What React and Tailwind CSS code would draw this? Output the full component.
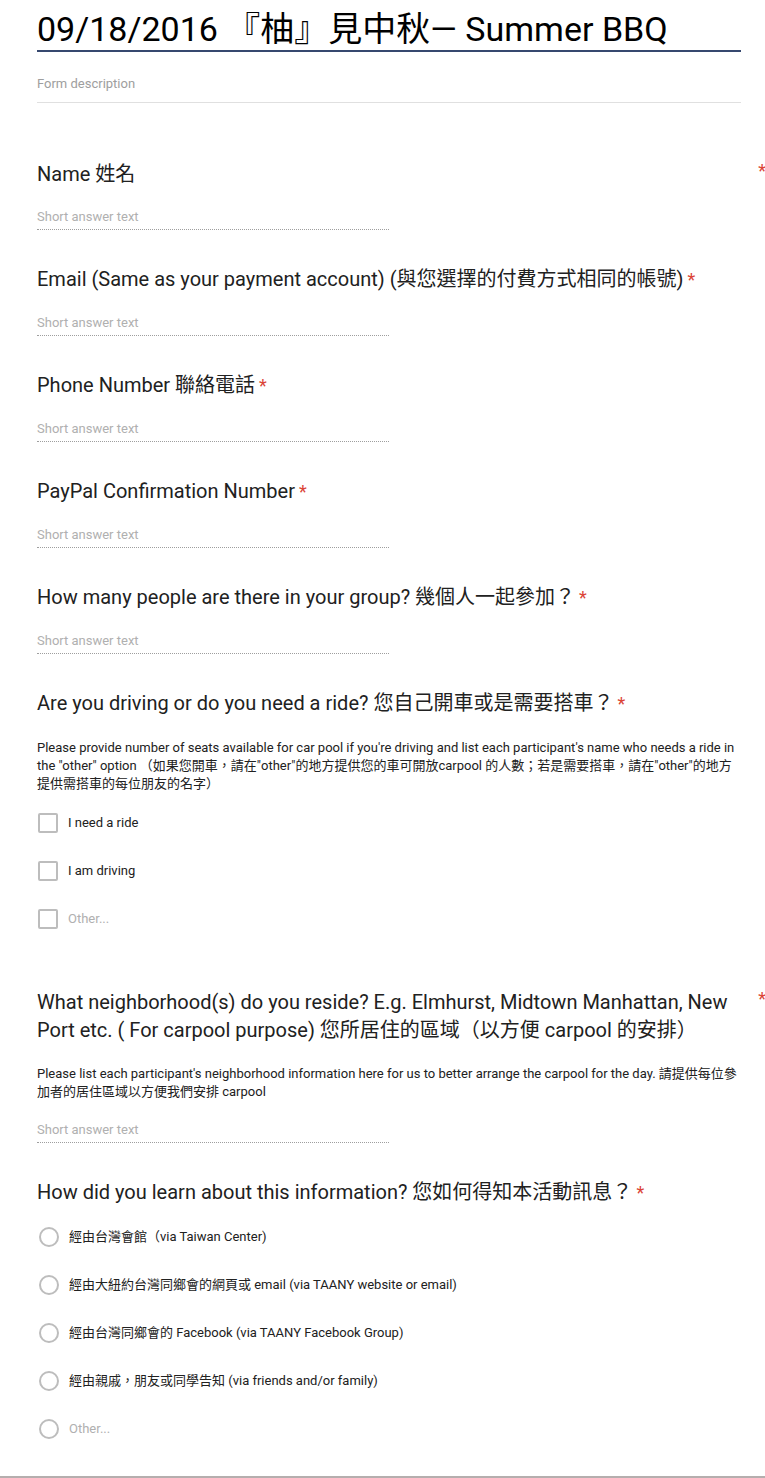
import React from "react";

const FONT = { fontFamily: 'Roboto, "Noto Sans CJK TC", sans-serif' };

function Star({ className = "" }) {
  return <span className={"text-[#db4437] " + className}>*</span>;
}

function Question({ title, inlineStar = true, farStar = false, children }) {
  return (
    <div className="relative mt-[35px]">
      <div className="text-[20px] leading-[28px] text-[#212121]">
        {title}
        {inlineStar && <Star className="ml-[4px] text-[18px]" />}
      </div>
      {farStar && (
        <span className="absolute right-[-25px] top-[0px] text-[18px] leading-[22px] text-[#db4437]">*</span>
      )}
      {children}
    </div>
  );
}

function ShortAnswer() {
  return (
    <div className="mt-[21px] w-[352px] border-b border-dotted border-[#9e9e9e] pb-[4px] text-[13px] leading-[16px] text-[#b0b0b0]">
      Short answer text
    </div>
  );
}

function Desc({ children }) {
  return (
    <div className="mt-[21px] text-[13px] leading-[18px] text-[#212121]">{children}</div>
  );
}

function CheckRow({ label, muted }) {
  return (
    <div className="flex h-[48px] items-center">
      <div className="ml-[1px] h-[20px] w-[20px] rounded-[2px] border-2 border-[#bdbdbd]" />
      <span className={"ml-[10px] text-[13px] " + (muted ? "text-[#b0b0b0]" : "text-[#212121]")}>{label}</span>
    </div>
  );
}

function RadioRow({ label, muted }) {
  return (
    <div className="flex h-[48px] items-center">
      <div className="ml-[2px] h-[20px] w-[20px] rounded-full border-2 border-[#bdbdbd]" />
      <span className={"ml-[10px] text-[13px] " + (muted ? "text-[#b0b0b0]" : "text-[#212121]")}>{label}</span>
    </div>
  );
}

export default function App() {
  return (
    <div style={FONT} className="w-[765px] min-h-[1478px] bg-white">
      <div className="border-b-2 border-[#b5aeae] pb-[23px] pl-[37px] pr-[24px]">
        <div className="border-b-2 border-[#36486f] pt-[9px] pb-[1px] text-[34px] leading-[40px] text-black">
          09/18/2016 『柚』見中秋— Summer BBQ
        </div>
        <div className="mt-[24px] border-b border-[#e0e0e0] pb-[10px] text-[13px] leading-[16px] text-[#9e9e9e]">
          Form description
        </div>

        <div className="pt-[22px]" />
        <Question title="Name 姓名" inlineStar={false} farStar>
          <ShortAnswer />
        </Question>
        <Question title="Email (Same as your payment account) (與您選擇的付費方式相同的帳號)">
          <ShortAnswer />
        </Question>
        <Question title="Phone Number 聯絡電話">
          <ShortAnswer />
        </Question>
        <Question title="PayPal Confirmation Number">
          <ShortAnswer />
        </Question>
        <Question title="How many people are there in your group? 幾個人一起參加？">
          <ShortAnswer />
        </Question>
        <Question title="Are you driving or do you need a ride? 您自己開車或是需要搭車？">
          <Desc>
            Please provide number of seats available for car pool if you're driving and list each participant's name who needs a ride in
            <br />
            the "other" option （如果您開車，請在"other"的地方提供您的車可開放carpool 的人數；若是需要搭車，請在"other"的地方
            <br />
            提供需搭車的每位朋友的名字）
          </Desc>
          <div className="mt-[6px] pb-[10px]">
            <CheckRow label="I need a ride" />
            <CheckRow label="I am driving" />
            <CheckRow label="Other..." muted />
          </div>
        </Question>
        <Question
          inlineStar={false}
          farStar
          title={
            <>
              What neighborhood(s) do you reside? E.g. Elmhurst, Midtown Manhattan, New
              <br />
              Port etc. ( For carpool purpose) 您所居住的區域（以方便 carpool 的安排）
            </>
          }
        >
          <Desc>
            Please list each participant's neighborhood information here for us to better arrange the carpool for the day. 請提供每位參
            <br />
            加者的居住區域以方便我們安排 carpool
          </Desc>
          <ShortAnswer />
        </Question>
        <Question title="How did you learn about this information? 您如何得知本活動訊息？">
          <div className="mt-[6px]">
            <RadioRow label="經由台灣會館（via Taiwan Center)" />
            <RadioRow label="經由大紐約台灣同鄉會的網頁或 email (via TAANY website or email)" />
            <RadioRow label="經由台灣同鄉會的 Facebook (via TAANY Facebook Group)" />
            <RadioRow label="經由親戚，朋友或同學告知 (via friends and/or family)" />
            <RadioRow label="Other..." muted />
          </div>
        </Question>
      </div>
    </div>
  );
}
